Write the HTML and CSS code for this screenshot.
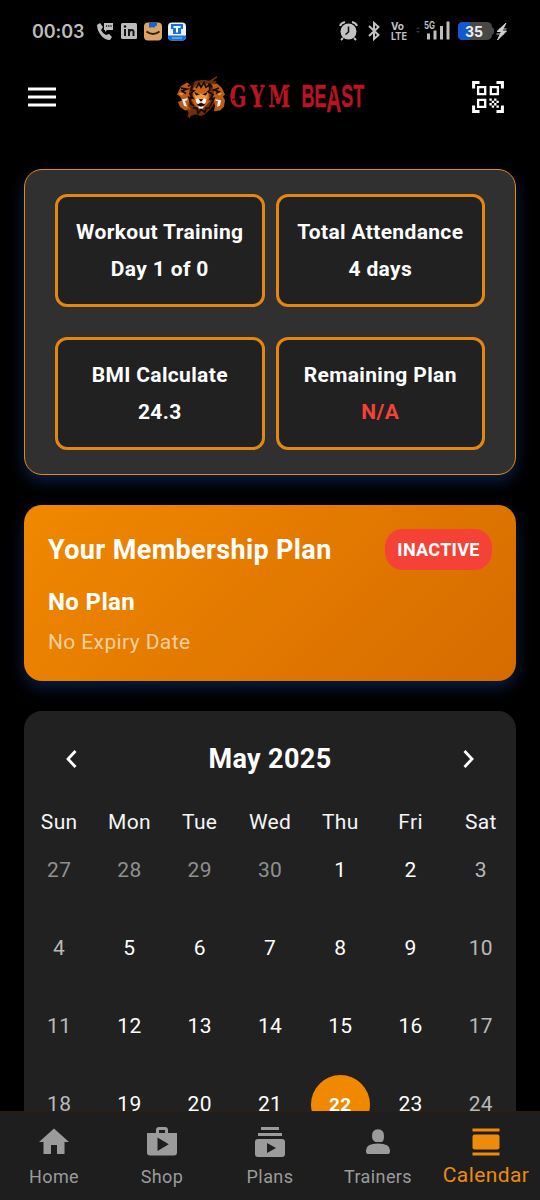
FILE: index.html
```html
<!DOCTYPE html>
<html lang="en">
<head>
<meta charset="utf-8">
<title>Gym Beast</title>
<link rel="stylesheet" href="styles.css">
</head>
<body>
<div class="app">
  <div class="status">
    <span class="time">00:03</span>
    <svg class="status-left" width="92" height="22" viewBox="0 0 92 22">
      <path d="M1 5 4 3l3 4-2 3q2 4 5 5l3-1 3 3-2 3Q8 20 4 14 1 10 1 5Z" fill="#bcbcbc"/>
      <path d="M8 3h9v7h-6l-2 2v-2H8Z" fill="#bcbcbc"/>
      <path d="M10 6h1.200M12.200 6h1.200M14.400 6h1.200" stroke="#111" stroke-width="1.300"/>
      <rect x="25" y="3" width="16" height="16" rx="1.500" fill="#bcbcbc"/>
      <path d="M29 9v7M33 16V9m0 4q0-3 2.500-3T37.500 13v3" fill="none" stroke="#151515" stroke-width="2"/>
      <circle cx="29" cy="6.500" r="1.300" fill="#151515"/>
      <rect x="48" y="2.500" width="18" height="18" rx="4" fill="#dda468"/>
      <path d="M53 2.500h8v3l-2 1-1 1.500-2-1-2 1-1-1Z" fill="#1765d0"/>
      <path d="M50.500 11.500q6.500 5 13 0" fill="none" stroke="#2d2118" stroke-width="1.800"/>
      <rect x="72" y="2.500" width="18" height="18" rx="4" fill="#e8f2fc"/>
      <path d="M72 15.500h18v1q0 4-4 4H76q-4 0-4-4Z" fill="#1671dc"/>
      <path d="M75 4h12v5h-2v5h-8V9h-2Z" fill="#1671dc"/>
      <path d="M77.500 7h7M81 7v5.500" stroke="#fff" stroke-width="2"/>
      <path d="M76 18h10" stroke="#9cc6f6" stroke-width="1"/>
    </svg>
    <svg class="status-right" width="180" height="28" viewBox="0 0 180 28">
      <path d="M2 9q1-3 5-4M14 5q4 1 5 4M5 21l-2 2M16 21l2 2" fill="none" stroke="#c2c2c2" stroke-width="2"/>
      <circle cx="10.500" cy="14.500" r="8" fill="#c2c2c2"/>
      <path d="M10.500 9.500v5.500l-3 2.500" fill="none" stroke="#111" stroke-width="1.600"/>
      <path d="m31 9 9.500 9-4.500 4V6l4.500 4-9.500 9" fill="none" stroke="#c2c2c2" stroke-width="2"/>
      <text x="53" y="12.500" class="tiny" textLength="13" lengthAdjust="spacingAndGlyphs">Vo</text>
      <text x="53" y="23" class="tiny" textLength="16" lengthAdjust="spacingAndGlyphs">LTE</text>
      <path d="m78 12 2-2 2 2ZM78 14l2 2 2-2Z" fill="#333"/>
      <text x="86" y="12" class="tiny net" textLength="11" lengthAdjust="spacingAndGlyphs">5G</text>
      <path d="M90.500 22.500v-6M97 22.500v-9M103.500 22.500V9M110 22.500V4.500" stroke="#bdbdbd" stroke-width="3"/>
      <path d="M125 5h23q6 0 6 5l2 2v4l-2 2q0 5-6 5h-23q-5 0-5-5v-8q0-5 5-5Z" fill="#484848"/>
      <path d="M125 5h7v18h-7q-5 0-5-5v-8q0-5 5-5Z" fill="#1458cf"/>
      <text x="127" y="20" class="battery" textLength="18" lengthAdjust="spacingAndGlyphs">35</text>
      <path d="m168 6-9 8.500h4.500l-4 8.500 9-9h-4.500Zm-7 6h7.500M158.500 17h7.500" fill="#d1d1d1" stroke="#d1d1d1" stroke-width="1"/>
    </svg>
  </div>

  <header class="topbar">
    <svg class="menu" width="30" height="24" viewBox="0 0 30 24"><path d="M1 4h28M1 12h28M1 20h28" stroke="#fff" stroke-width="3"/></svg>
    <svg class="logo" width="194" height="48" viewBox="0 0 194 48">
      <g transform="translate(0 3) scale(1 .93)">
      <path d="M14 9 20 5l8-1 5 1 6-3-2 4 4-1-2 3 3 3-3 4 1 9-3 8-4 5-4 4-4 2-6-2-4 2-2 3v-5l-3-7-2-9 1-8Z" fill="#6d2f0c"/>
      <path d="m1 20 4-9 6-4 4 3-2 6 1 8-2 8 3 4-6 1-5-4-2-5 4-2-2-4ZM36 9l5-1 5 5 3 7-2 2 2 4-1 7-4 4-6 1 1-6-2-8 1-8Z" fill="#bb5d16"/>
      <path d="m17 14 4-5 5-1 6 1 3 6-2 6 1 6-4 5-5 4-6-4-3-6 1-6Z" fill="#c56317"/>
      <path d="m12 11 5-3-2 7 3 1-4 3 3 5-4-1 2 7 3 2M36 12l-3-4 1 7-2 2 5 3-3 5 4-1-4 9M20 13l3-5 2 4 3-5 2 5 3-2M5 13l6 1-5 2 4 3M43 13l-5 2 5 2-3 2M17 34l4 1 1 5 3-4 4 3 1-4 4-1" fill="none" stroke="#1a0b04" stroke-width="1.800"/>
      <path d="m18 17 6 2h2l6-2-1 8-3 7-3 2-3-2-3-7Z" fill="#f19a40"/>
      <path d="m18 17 6 3-4 1M32 17l-6 3 4 1M22 25h6l-3 3ZM21 30l4-1 4 1-2 4h-4Z" fill="#160b06"/>
      <path d="m20 25 2-1 3 4-3 2-2-2ZM28 24l2 1v3l-2 2-3-2ZM22 32l3 1 3-1-1 3h-4ZM6 25l6-1-1 2-2 1 2 6-3-1ZM45 26l-6-1 1 2h2l-1 6 3-1Z" fill="#f2f2f2"/>
      <path d="M3 18l5 1-3 2ZM46 18l-5 1 3 2Z" fill="#f0a04b"/>
      <path d="m14 39-2 5M36 4l5-3M12 35l2 4" fill="none" stroke="#7c340f" stroke-width="1.400"/>
      </g>
      <g class="brand">
        <text class="gym" transform="translate(53.500 34) scale(.66 1)" textLength="92">GYM</text>
        <text class="beast" transform="translate(125.500 34) scale(.558 1)">BE<tspan class="tall" dy="5">A</tspan><tspan dy="-5">ST</tspan></text>
      </g>
      <path d="m56 27 5-2M72 14l3 4M97 27l4-3M109 17l4-2M130 17l5 3M143 28l4-3M156 16l2 9M168 24l4 2M179 18l3-2" stroke="#280006" stroke-width="1"/>
    </svg>
    <svg class="qr" width="32" height="32" viewBox="0 0 34 34">
      <path d="M1.700 8V1.700H8M26 1.700h6.300V8M1.700 26v6.300H8M26 32.300h6.300V26" fill="none" stroke="#fff" stroke-width="3.200"/>
      <path d="M6.500 6.500h7.500v7.500h-7.500ZM20 6.500h7.500v7.500h-7.500ZM6.500 20h7.500v7.500h-7.500Z" fill="none" stroke="#fff" stroke-width="2.500"/>
      <path d="M18.500 18.500h2.500v2.500h-2.500ZM23.500 18.500h2.500v2.500h-2.500ZM21 21h2.500v2.500H21ZM26 21h2.500v2.500H26ZM18.500 23.500h2.500V26h-2.500ZM23.500 23.500h2.500V26h-2.500ZM21 26h2.500v2.500H21ZM26 26h2.500v2.500H26Z" fill="#fff"/>
    </svg>
  </header>

  <main class="content">
    <section class="stats">
      <div class="stat"><span>Workout Training</span><span>Day 1 of 0</span></div>
      <div class="stat"><span>Total Attendance</span><span>4 days</span></div>
      <div class="stat"><span>BMI Calculate</span><span>24.3</span></div>
      <div class="stat"><span>Remaining Plan</span><span class="missing">N/A</span></div>
    </section>

    <section class="plan">
      <div class="plan-head"><h2>Your Membership Plan</h2><span class="badge">INACTIVE</span></div>
      <div class="plan-name">No Plan</div>
      <div class="plan-expiry">No Expiry Date</div>
    </section>

    <section class="calendar">
      <div class="cal-head">
        <svg width="24" height="24" viewBox="0 0 24 24"><path d="m15.500 4-7.500 8 7.500 8" fill="none" stroke="#fff" stroke-width="2.800"/></svg>
        <h2>May 2025</h2>
        <svg width="24" height="24" viewBox="0 0 24 24"><path d="m8.500 4 7.500 8-7.500 8" fill="none" stroke="#fff" stroke-width="2.800"/></svg>
      </div>
      <div class="weekdays"><span>Sun</span><span>Mon</span><span>Tue</span><span>Wed</span><span>Thu</span><span>Fri</span><span>Sat</span></div>
      <div class="days">
        <span class="out">27</span><span class="out">28</span><span class="out">29</span><span class="out">30</span><span>1</span><span>2</span><span class="weekend">3</span>
        <span class="weekend">4</span><span>5</span><span>6</span><span>7</span><span>8</span><span>9</span><span class="weekend">10</span>
        <span class="weekend">11</span><span>12</span><span>13</span><span>14</span><span>15</span><span>16</span><span class="weekend">17</span>
        <span class="weekend">18</span><span>19</span><span>20</span><span>21</span><span><b class="today">22</b></span><span>23</span><span class="weekend">24</span>
      </div>
    </section>
  </main>

  <nav class="tabs">
    <div class="tab">
      <svg width="36" height="36" viewBox="0 0 24 24"><path d="M10 20v-6h4v6h5v-8h3L12 3 2 12h3v8z"/></svg><span>Home</span>
    </div>
    <div class="tab">
      <svg width="36" height="36" viewBox="0 0 24 24"><path fill-rule="evenodd" d="M16 6V4q0-2-2-2h-4Q8 2 8 4v2H2v13q0 2 2 2h16q2 0 2-2V6ZM10 4h4v2h-4ZM9 18V9l7.500 4.500Z"/></svg><span>Shop</span>
    </div>
    <div class="tab">
      <svg width="36" height="36" viewBox="0 0 24 24"><path fill-rule="evenodd" d="M20 8H4V6h16ZM18 2H6v2h12ZM22 12v8q0 2-2 2H4q-2 0-2-2v-8q0-2 2-2h16q2 0 2 2ZM16 16l-6-3.270v6.530Z"/></svg><span>Plans</span>
    </div>
    <div class="tab">
      <svg width="36" height="36" viewBox="0 0 24 24"><path d="M8 8q0-4.500 4-4.500T16 8t-2.300 4h-3.400Q8 11 8 8ZM4 17.500Q4 13 12 13t8 4.500v.8q0 1.700-1.800 1.700H5.800Q4 20 4 18.300Z"/></svg><span>Trainers</span>
    </div>
    <div class="tab active">
      <svg width="36" height="36" viewBox="0 0 24 24"><path d="M3 3h18v2H3ZM3 19h18v2H3Z"/><rect x="3" y="7" width="18" height="10" rx="1.500"/></svg><span>Calendar</span>
    </div>
  </nav>
</div>
</body>
</html>
```
FILE: styles.css
```css
* { box-sizing: border-box; }
body { margin: 0; background: #000; color: #fff; font-family: Roboto, sans-serif; }
h2 { margin: 0; }
svg { display: block; flex: none; }

.app { width: 540px; height: 1200px; overflow: hidden; display: flex; flex-direction: column; background: #000; }

.status { height: 62px; flex: none; display: flex; align-items: center; padding: 0 22px 0 32px; }
.time { width: 64px; font: 600 18px Inter, sans-serif; letter-spacing: -.1px; color: #bdbdbd; }
.status-right { margin-left: auto; }
.tiny { font: 700 10.500px Inter, sans-serif; fill: #c2c2c2; }
.net { font-size: 10px; }
.battery { font: 700 15px Inter, sans-serif; fill: #eee; }

.topbar { height: 70px; flex: none; display: flex; align-items: center; padding: 0 0 0 27px; }
.logo { margin-left: 119px; }
.qr { margin-left: 102px; }
.brand { fill: #b81520; stroke: #b81520; stroke-width: .5px; }
.gym { font: 700 30px "DejaVu Serif", serif; }
.beast { font: 700 32px "Liberation Sans", sans-serif; }
.tall { font-size: 37px; }

.content { flex: 1; min-height: 0; overflow: hidden; padding: 37px 24px 0; display: flex; flex-direction: column; }

.stats {
  height: 306px; flex: none; padding: 24px 30px;
  display: grid; grid-template-columns: 1fr 1fr; grid-template-rows: 113px 113px; gap: 30px 11px;
  background: #303030; border: 1.500px solid #e78a10; border-radius: 18px;
  box-shadow: 0 6px 15px rgba(33, 100, 220, .32);
}
.stat {
  display: flex; flex-direction: column; align-items: center; padding-top: 23px;
  background: #212121; border: 3px solid #e48710; border-radius: 12px;
  font-size: 21px; font-weight: 700; line-height: 25px; letter-spacing: .35px; gap: 12px; white-space: nowrap;
}
.missing { color: #f44336; }

.plan {
  height: 176px; flex: none; margin-top: 30px; padding: 24px;
  background: linear-gradient(135deg, #f08800, #d66b00); border-radius: 18px;
  box-shadow: 0 6px 15px rgba(33, 100, 220, .32);
}
.plan-head { display: flex; align-items: center; justify-content: space-between; height: 41px; }
.plan-head h2 { font-size: 27px; font-weight: 700; letter-spacing: .37px; }
.badge { width: 107px; height: 41px; border-radius: 18px; background: #f44336; font-size: 18px; font-weight: 700; letter-spacing: .3px; line-height: 41px; text-align: center; }
.plan-name { margin-top: 18px; font-size: 24px; font-weight: 700; line-height: 28px; letter-spacing: .37px; }
.plan-expiry { margin-top: 13px; font-size: 21px; line-height: 26px; letter-spacing: .38px; color: rgba(255, 255, 255, .65); }

.calendar { flex: none; margin-top: 30px; background: #212121; border-radius: 18px 18px 0 0; }
.cal-head { height: 96px; display: flex; align-items: center; justify-content: space-between; padding: 0 36px; }
.cal-head h2 { font-size: 27px; font-weight: 700; letter-spacing: .37px; }
.weekdays, .days { display: grid; grid-template-columns: repeat(7, 1fr); text-align: center; font-size: 21px; letter-spacing: .3px; }
.weekdays { height: 24px; margin-top: 3px; line-height: 24px; color: #f5f5f5; }
.days { grid-auto-rows: 78px; margin-top: -3px; }
.days > span { display: flex; align-items: center; justify-content: center; }
.days .out { color: #909090; }
.days .weekend { color: #b9b9b9; }
.today { width: 59px; height: 59px; flex: none; border-radius: 50%; background: #f08800; font-size: 19px; line-height: 59px; }

.tabs { height: 89px; flex: none; display: grid; grid-template-columns: repeat(5, 1fr); background: #1e1e1e; border-top: 1px solid #2d1e12; }
.tab { display: flex; flex-direction: column; align-items: center; padding-top: 12px; color: #9b9b9b; fill: #9b9b9b; font-size: 18px; line-height: 24px; letter-spacing: .4px; gap: 5px; white-space: nowrap; }
.active { color: #ed8b0c; fill: #ed8b0c; font-size: 21px; gap: 3px; }
```
